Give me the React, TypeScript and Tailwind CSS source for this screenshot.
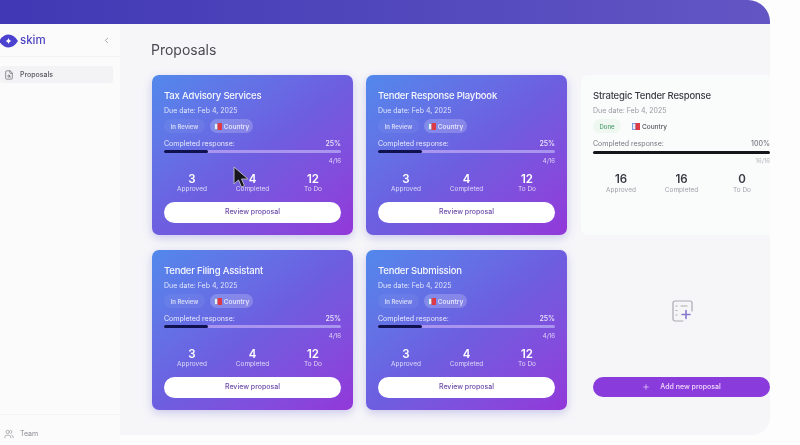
import React from "react";
import { ChevronLeft, FileSearch, Plus, Users } from "lucide-react";

function Flag() {
  return (
    <svg width="8" height="7" viewBox="0 0 8 7" className="shrink-0">
      <rect width="4" height="7" fill="#7d9fe0" />
      <rect x="1" y="1" width="2.500" height="5" fill="#e8eefa" />
      <rect x="3.500" width="4.500" height="7" fill="#dc3a46" />
    </svg>
  );
}

function Stat({ n, label, light }: { n: string; label: string; light: boolean }) {
  return (
    <div className="flex w-[56px] flex-col items-center">
      <div className={`text-[11.5px] leading-[12px] font-semibold ${light ? "text-white" : "text-[#3a3a44]"}`}>{n}</div>
      <div className={`text-[6.5px] leading-[9px] ${light ? "text-white/75" : "mt-[1px] text-[#a2a3ab]"}`}>{label}</div>
    </div>
  );
}

function GradientCard({ title }: { title: string }) {
  return (
    <div className="flex h-[160px] w-[201px] shrink-0 flex-col rounded-[7px] bg-gradient-to-br from-[#5188ec] via-[#6d5ee0] to-[#9237d9] px-3 pt-[15px] shadow-[0_3px_10px_rgba(90,80,200,0.28)]">
      <div className="text-[9.5px] leading-[12px] font-medium tracking-[-0.02em] text-white/95">{title}</div>
      <div className="mt-[4px] text-[7px] leading-[10px] text-white/80">Due date: Feb 4, 2025</div>
      <div className="mt-[3px] flex h-[14px] items-center gap-[5px]">
        <div className="flex h-[14px] w-[41px] items-center justify-center rounded-full bg-white/5 text-[6px] font-semibold text-white/70">In Review</div>
        <div className="flex h-[14px] w-[43px] items-center justify-center gap-[2px] rounded-full bg-white/20 text-[6.5px] font-semibold text-white/75">
          <Flag />
          <span className="pt-[3px]">Country</span>
        </div>
      </div>
      <div className="mt-[6px] flex justify-between text-[7px] leading-[10px] text-white/85">
        <span>Completed response:</span>
        <span className="font-medium">25%</span>
      </div>
      <div className="mt-[1px] h-[3px] w-full rounded-full bg-[#a994f0]">
        <div className="h-[3px] w-[44px] rounded-full bg-[#10124f]" />
      </div>
      <div className="mt-[3px] text-right text-[6px] leading-[9px] text-white/75">4/16</div>
      <div className="mt-[8px] flex justify-between">
        <Stat n="3" label="Approved" light />
        <Stat n="4" label="Completed" light />
        <Stat n="12" label="To Do" light />
      </div>
      <div className="mt-[8px] flex h-[21px] items-center justify-center rounded-full bg-white text-[7px] font-medium text-[#6b4aa8]">
        Review proposal
      </div>
    </div>
  );
}

function DoneCard() {
  return (
    <div className="ml-[1px] flex h-[160px] w-[201px] shrink-0 flex-col rounded-[7px] bg-[#fafbfb] px-3 pt-[15px]">
      <div className="text-[9.5px] leading-[12px] font-medium tracking-[-0.02em] text-[#3d3d47]">Strategic Tender Response</div>
      <div className="mt-[4px] text-[7px] leading-[10px] text-[#9a9ba3]">Due date: Feb 4, 2025</div>
      <div className="mt-[3px] flex h-[14px] items-center gap-[5px]">
        <div className="flex h-[14px] w-[28px] items-center justify-center rounded-full bg-[#eef8f1] text-[6px] font-medium text-[#4b9b6b]">Done</div>
        <div className="ml-[6px] flex h-[14px] items-center gap-[2px] text-[6.5px] font-medium text-[#55565f]">
          <Flag />
          <span className="pt-[3px]">Country</span>
        </div>
      </div>
      <div className="mt-[6px] flex justify-between text-[7px] leading-[10px] text-[#77787f]">
        <span>Completed response:</span>
        <span className="font-medium">100%</span>
      </div>
      <div className="mt-[2px] h-[3px] w-full rounded-full bg-[#15151c]" />
      <div className="mt-[2px] text-right text-[6px] leading-[9px] text-[#b5b6bc]">16/16</div>
      <div className="mt-[8px] flex justify-between">
        <Stat n="16" label="Approved" light={false} />
        <Stat n="16" label="Completed" light={false} />
        <Stat n="0" label="To Do" light={false} />
      </div>
    </div>
  );
}

function AddCard() {
  return (
    <div className="ml-[1px] flex h-[160px] w-[201px] shrink-0 flex-col items-stretch px-3">
      <div className="flex flex-1 items-center justify-center pb-[6px]">
        <svg width="22" height="22" viewBox="0 0 22 22" fill="none" strokeLinecap="round">
          <path d="M12 21H4a2 2 0 0 1-2-2V3a2 2 0 0 1 2-2h15a2 2 0 0 1 2 2v8" stroke="#a9a9b1" strokeWidth="1.2" />
          <path d="M5 6h1M5 10.500h1M5 15h1M10 6h6" stroke="#a9a9b1" strokeWidth="1.2" />
          <path d="M15 10.500v8M11 14.500h8" stroke="#8678cf" strokeWidth="1.6" />
        </svg>
      </div>
      <div className="mb-[13px] flex h-[20px] items-center justify-center gap-[10px] rounded-full bg-[#8a3bdc] text-[7px] font-medium text-[#f0dcfb]">
        <Plus size={8} strokeWidth={2} />
        <span>Add new proposal</span>
      </div>
    </div>
  );
}

function Logo() {
  return (
    <svg width="19" height="14" viewBox="0 0 19 14" className="-ml-[1px]">
      <path d="M0 7C3 2.500 6 .5 9.500 .5S16 2.500 19 7c-3 4.500-6 6.500-9.500 6.500S3 11.500 0 7Z" fill="#4c42d0" />
      <path d="M9.500 3.800c.4 1.800 1 2.500 3 3.200-2 .7-2.600 1.400-3 3.200-.4-1.800-1-2.500-3-3.200 2-.7 2.600-1.400 3-3.200Z" fill="#fff" />
    </svg>
  );
}

function Cursor() {
  return (
    <svg width="16" height="24" viewBox="0 0 16 24" className="absolute left-[233px] top-[166px]">
      <path d="M1 1v17l4.500-4 3 7 3-1.300-3-6.700H15Z" fill="#16161c" stroke="#b4b4c2" strokeWidth="1" />
    </svg>
  );
}

export default function App() {
  return (
    <div className="relative h-[445px] w-[800px] overflow-hidden bg-[#fdfdfe] font-['Inter',sans-serif] blur-[0.4px]">
      <div className="flex h-[445px] w-[770px] flex-col">
        <div className="h-[24px] shrink-0 rounded-tr-[22px] bg-gradient-to-r from-[#4038b4] to-[#6355c4]" />
        <div className="flex min-h-0 flex-1">
          <aside className="flex w-[120px] shrink-0 flex-col bg-[#fbfbfc]">
            <div className="flex h-[33px] items-center justify-between border-b border-[#f3f3f6] pt-[1px] pr-[9px]">
              <div className="flex items-center gap-[2px]">
                <Logo />
                <span className="text-[11.5px] font-medium text-[#4f46c2]">skim</span>
              </div>
              <ChevronLeft size={9} className="text-[#8a8a92]" />
            </div>
            <div className="mt-[9px] mr-[7px] flex h-[17px] items-center gap-[6px] rounded-[3px] bg-[#f3f3f5] pl-[4px]">
              <FileSearch size={10} strokeWidth={1.5} className="text-[#55565e]" />
              <span className="pt-[2px] text-[7px] font-medium text-[#55565e]">Proposals</span>
            </div>
            <div className="flex-1" />
            <div className="flex h-[31px] items-start gap-[6px] border-t border-[#f3f3f6] pt-[14px] pl-[4px]">
              <Users size={10} strokeWidth={1.5} className="text-[#8a8a92]" />
              <span className="text-[7px] leading-[10px] text-[#8a8a92]">Team</span>
            </div>
          </aside>
          <main className="h-[411px] min-w-0 flex-1 overflow-hidden rounded-br-[18px] bg-[#f6f6f9] pl-[32px]">
            <h1 className="mt-[15px] -ml-[1px] text-[14px] leading-[22px] font-normal text-[#4a4a52]">Proposals</h1>
            <div className="mt-[14px] flex gap-[13px]">
              <GradientCard title="Tax Advisory Services" />
              <GradientCard title="Tender Response Playbook" />
              <DoneCard />
            </div>
            <div className="mt-[15px] flex gap-[13px]">
              <GradientCard title="Tender Filing Assistant" />
              <GradientCard title="Tender Submission" />
              <AddCard />
            </div>
          </main>
        </div>
      </div>
      <Cursor />
    </div>
  );
}
